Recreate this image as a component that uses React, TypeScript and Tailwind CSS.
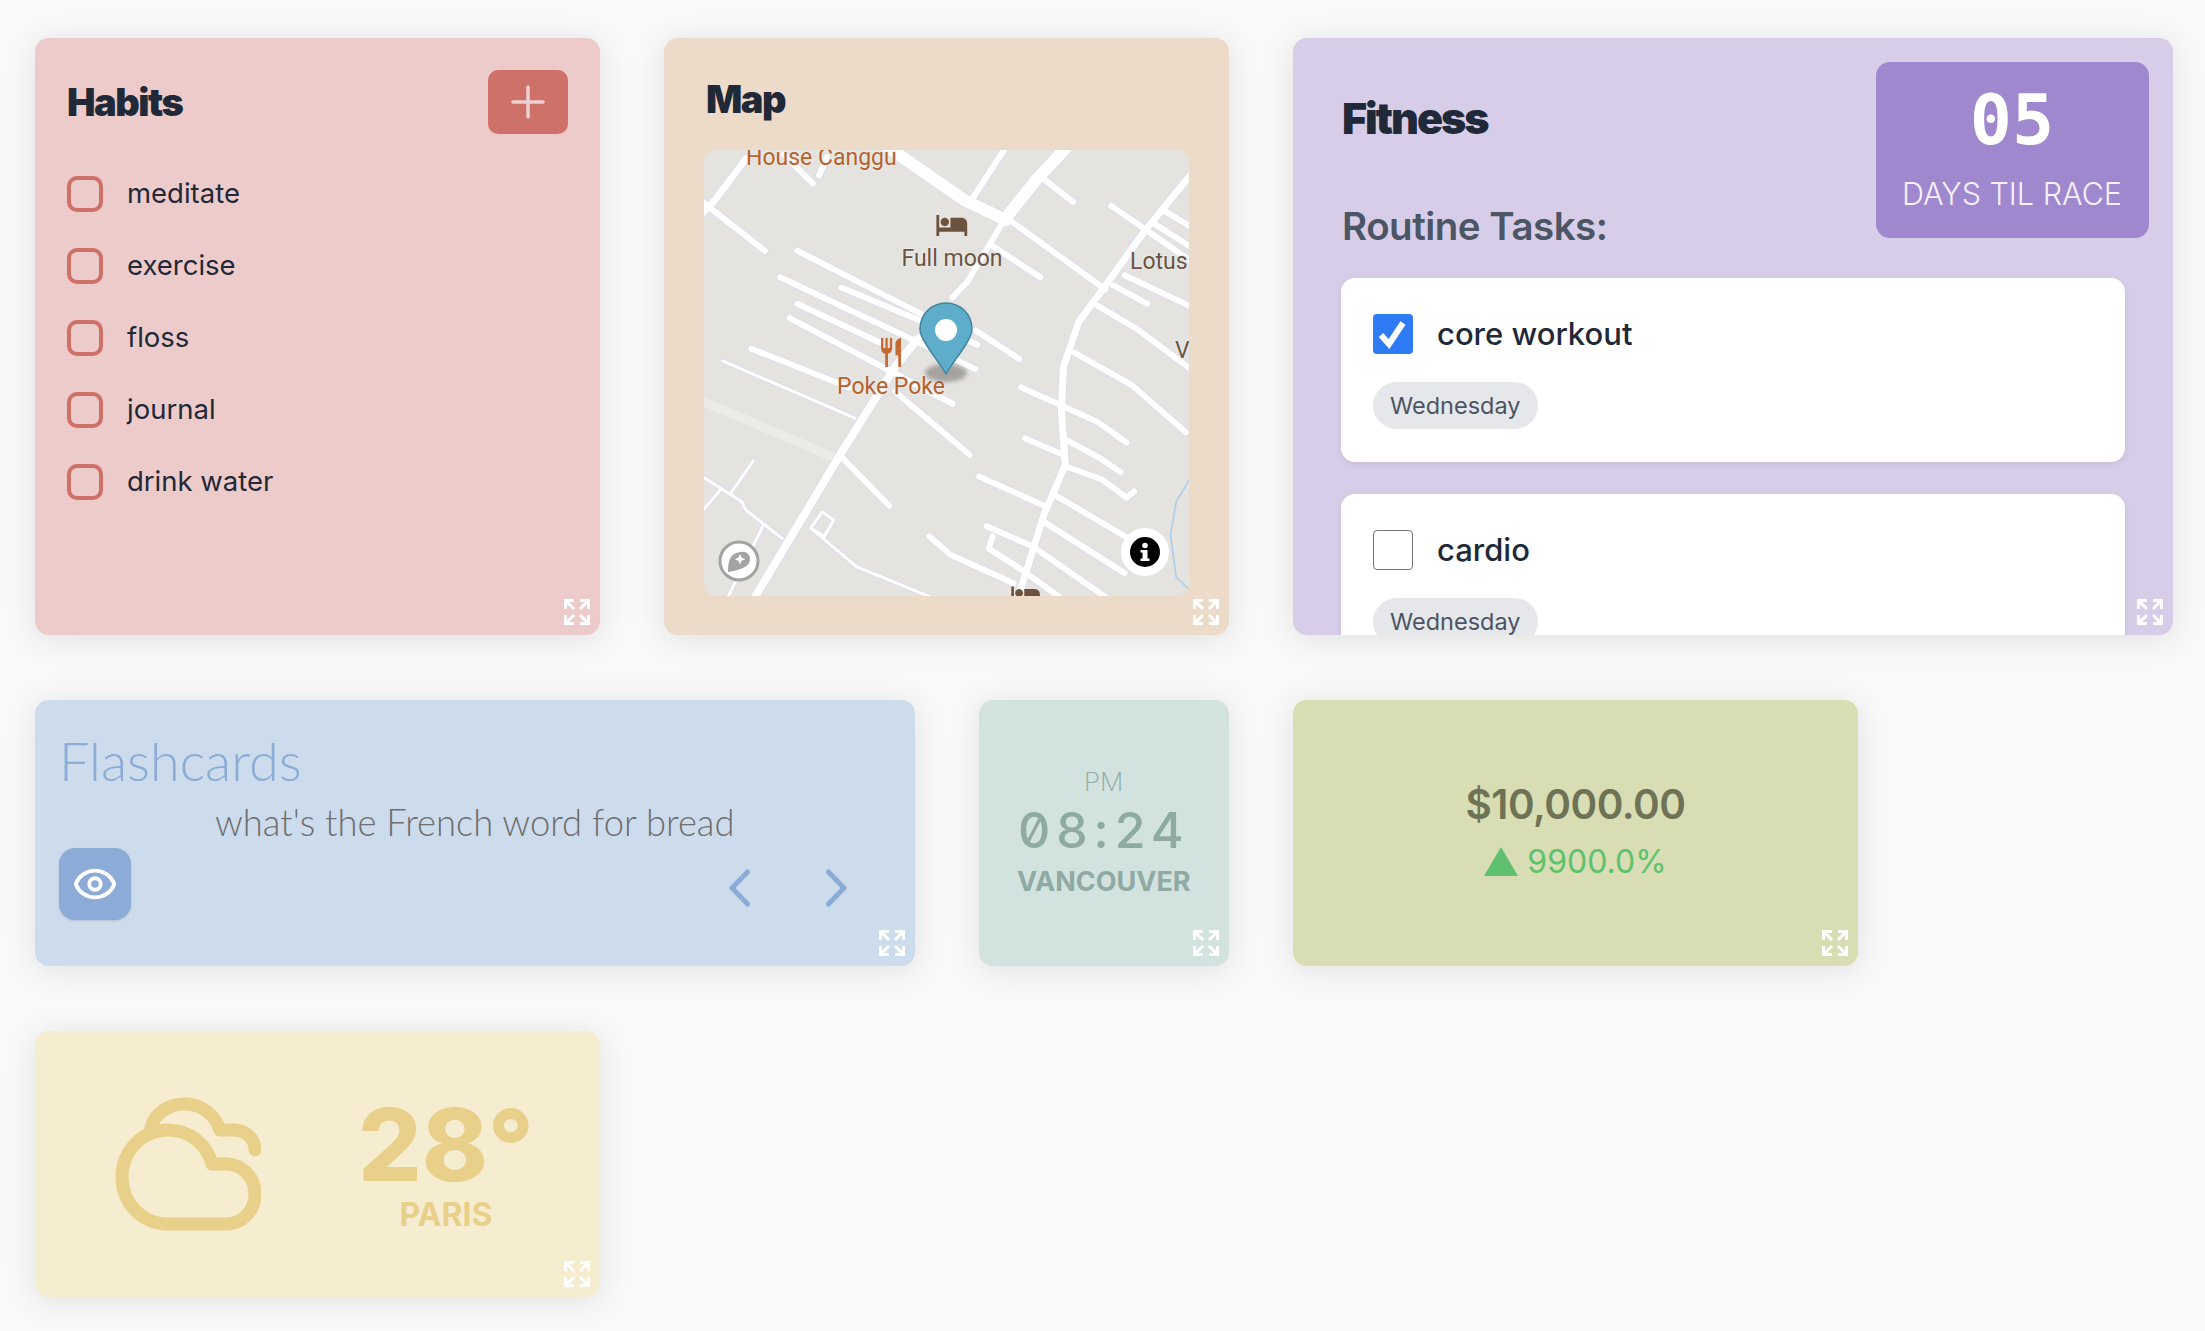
// Dashboard of pastel widgets: habits, map, fitness, flashcards, clock, stocks, weather.
import type { ReactNode } from "react";
import { Eye } from "lucide-react";

const habits = ["meditate", "exercise", "floss", "journal", "drink water"];

// Roads as [stroke width, points], in a 1268x1093 sketch space scaled down to the map box.
const roads: [number, string][] = [
  [12, "620,310 820,440 930,490"],
  [12, "1090,310 1010,390 925,490"],
  [6, "925,490 830,640 790,680"],
  [6, "925,318 840,440"],
  [6, "1030,390 1105,445"],
  [6, "940,490 1190,660"],
  [7, "1420,370 1290,520 1190,650 1120,740 1080,850 1075,960 1085,1090 1030,1210 960,1420"],
  [6, "1205,455 1290,510 1420,595"],
  [6, "1340,465 1420,510"],
  [6, "1320,500 1420,560"],
  [6, "1210,650 1300,695"],
  [6, "1240,625 1420,705"],
  [6, "1170,700 1270,755 1420,860"],
  [6, "1110,815 1260,895 1400,1010"],
  [6, "970,900 1065,940 1170,985 1245,1035"],
  [6, "980,1025 1080,1065"],
  [6, "1090,1030 1170,1070 1230,1108"],
  [6, "1090,1095 1180,1125 1245,1170 1265,1155"],
  [6, "860,1118 1030,1190"],
  [6, "1060,1165 1250,1270"],
  [6, "1030,1230 1240,1355"],
  [6, "880,1240 1000,1290 1200,1420"],
  [6, "895,1265 885,1295 960,1340 1080,1420"],
  [6, "730,1265 785,1310 950,1380"],
  [3, "420,1245 540,1340 750,1420"],
  [3, "450,1205 480,1225 455,1265 420,1245 450,1205"],
  [6, "385,565 720,725"],
  [6, "850,760 965,830"],
  [6, "340,630 850,855"],
  [6, "500,655 855,795"],
  [6, "385,695 600,790"],
  [6, "365,730 790,940"],
  [6, "265,805 520,900"],
  [3, "190,835 535,975"],
  [8, "700,780 640,850 500,1060 270,1420"],
  [6, "500,1070 625,1190"],
  [6, "640,910 835,1065"],
  [6, "130,440 300,565"],
  [7, "250,340 170,440 130,480"],
  [6, "350,330 425,400"],
  [6, "462,335 442,380"],
  [3, "130,1115 240,1180 250,1200 345,1270"],
  [3, "270,1080 210,1160"],
  [3, "185,1150 130,1210"],
  [3, "295,1240 200,1420"],
  [6, "890,550 1020,630"],
];

function ExpandIcon() {
  return (
    <svg
      viewBox="0 0 26 26"
      className="absolute right-[10px] bottom-[10px] h-[26px] w-[26px] text-white"
      fill="none"
      stroke="currentColor"
      strokeWidth="3"
    >
      <path d="M1.5 10V1.5H10M2 2l8 8" />
      <path d="M24.5 10V1.5H16M24 2l-8 8" />
      <path d="M1.5 16v8.5H10M2 24l8-8" />
      <path d="M24.5 16v8.5H16M24 24l-8-8" />
    </svg>
  );
}

function Card({ className, children }: { className: string; children: ReactNode }) {
  return (
    <div
      className={`relative overflow-hidden rounded-[14px] shadow-[0_4px_32px_rgba(0,0,0,0.1)] ${className}`}
    >
      {children}
      <ExpandIcon />
    </div>
  );
}

function Habits() {
  return (
    <Card className="col-span-2 row-span-2 bg-[#edcbcb] pt-[32px] pr-[32px] pl-[32px]">
      <div className="flex items-center justify-between">
        <h2 className="font-['Inter'] text-[38px] leading-[64px] font-black tracking-[-1.5px] text-[#1f2937]">Habits</h2>
        <button className="flex h-[64px] w-[80px] items-center justify-center rounded-[10px] bg-[#cd7169]">
          <svg viewBox="0 0 34 34" className="h-[34px] w-[34px]" stroke="#efcfcf" strokeWidth="3.5" strokeLinecap="round">
            <path d="M17 2v30M2 17h30" />
          </svg>
        </button>
      </div>
      <ul className="mt-[42px] flex flex-col gap-[36px]">
        {habits.map((h) => (
          <li key={h} className="flex h-[36px] items-center gap-[24px]">
            <span className="h-[36px] w-[36px] rounded-[10px] border-[4px] border-[#cd7169]" />
            <span className="font-['Inter'] text-[27.5px] text-[#1f2937]">{h}</span>
          </li>
        ))}
      </ul>
    </Card>
  );
}

function MapLabel({ x, y, anchor, fill, children }: { x: number; y: number; anchor?: "middle"; fill: string; children: string }) {
  return (
    <text
      x={x}
      y={y}
      textAnchor={anchor}
      fill={fill}
      stroke="#ecebe8"
      strokeWidth="2"
      paintOrder="stroke"
      fontSize="23"
      fontFamily="Roboto, sans-serif"
    >
      {children}
    </text>
  );
}

function MapView() {
  return (
    <svg viewBox="0 0 485 446" className="h-[446px] w-[485px] rounded-[12px] bg-[#e5e3df]">
      <g transform="scale(0.3827 0.408) translate(-141 -318)" fill="none" strokeLinecap="round" strokeLinejoin="round">
        <polyline points="141,935 490,1075" stroke="#ecebe6" strokeWidth="9" vectorEffect="non-scaling-stroke" />
        <polyline points="1420,1110 1375,1180 1360,1260 1375,1365 1420,1405" stroke="#a8cdea" strokeWidth="1.5" vectorEffect="non-scaling-stroke" />
        {roads.map(([w, p], i) => (
          <polyline key={i} points={p} stroke="#dcdeeb" strokeWidth={w + 2} vectorEffect="non-scaling-stroke" />
        ))}
        {roads.map(([w, p], i) => (
          <polyline key={i} points={p} stroke="#ffffff" strokeWidth={w} vectorEffect="non-scaling-stroke" />
        ))}
      </g>

      <MapLabel x={42} y={15} fill="#b5622d">House Canggu</MapLabel>
      <MapLabel x={248} y={116} anchor="middle" fill="#6b5445">Full moon</MapLabel>
      <MapLabel x={426} y={119} fill="#6b5445">Lotus</MapLabel>
      <MapLabel x={471} y={208} fill="#6b5445">V</MapLabel>
      <MapLabel x={187} y={244} anchor="middle" fill="#b5622d">Poke Poke</MapLabel>

      {/* hotel icons */}
      <g transform="translate(231 58) scale(1.4)" fill="#6e5240">
        <path d="M7 13c1.66 0 3-1.34 3-3S8.66 7 7 7s-3 1.34-3 3 1.34 3 3 3zm12-6h-8v7H3V5H1v15h2v-3h18v3h2v-9c0-2.21-1.79-4-4-4z" />
      </g>
      <g transform="translate(306 430) scale(1.3)" fill="#6e5240">
        <path d="M7 13c1.66 0 3-1.34 3-3S8.66 7 7 7s-3 1.34-3 3 1.34 3 3 3zm12-6h-8v7H3V5H1v15h2v-3h18v3h2v-9c0-2.21-1.79-4-4-4z" />
      </g>
      {/* restaurant icon */}
      <g transform="translate(173.700 185) scale(1.11 1.45)" fill="#c56a33">
        <path d="M11 9H9V2H7v7H5V2H3v7c0 2.12 1.66 3.84 3.75 3.97V22h2.5v-9.03C11.34 12.84 13 11.12 13 9V2h-2v7zm5-3v8h2.5v8H21V2c-2.76 0-5 2.24-5 4z" />
      </g>

      {/* pin */}
      <ellipse cx="242" cy="223" rx="21" ry="9" fill="#000000" opacity="0.28" className="blur-[2px]" />
      <path
        d="M242 224 C234 210 216 190 216 179 C216 164 228 153 242 153 C256 153 268 164 268 179 C268 190 250 210 242 224 Z"
        fill="#5eaecb"
        stroke="#41869f"
        strokeWidth="1.5"
      />
      <ellipse cx="242" cy="180" rx="11" ry="11" fill="#ffffff" />

      {/* attribution controls */}
      <circle cx="35" cy="411" r="19" fill="#ffffff" stroke="#a3a3a3" strokeWidth="3" />
      <path d="M24 422 C24 412 25 404 36 402 C43 401 46 405 46 409 C46 417 36 420 24 422 Z" fill="#a3a3a3" />
      <path d="M36 404 l1.6 3.6 3.6 1.6 -3.6 1.6 -1.6 3.6 -1.6 -3.6 -3.6 -1.6 3.6 -1.6 z" fill="#ffffff" />
      <circle cx="441" cy="402" r="24" fill="#ffffff" />
      <circle cx="441" cy="402" r="15" fill="#000000" />
      <rect x="438.5" y="400" width="5" height="11" fill="#ffffff" />
      <rect x="436.5" y="400" width="5" height="2.5" fill="#ffffff" />
      <rect x="436.5" y="408.500" width="9" height="2.5" fill="#ffffff" />
      <circle cx="441" cy="395.500" r="2.800" fill="#ffffff" />
    </svg>
  );
}

function MapCard() {
  return (
    <Card className="col-span-2 row-span-2 bg-[#eddbc9] pt-[37px] pl-[40px]">
      <h2 className="pl-[2px] font-['Inter'] text-[38px] leading-[48px] font-black tracking-[-1.5px] text-[#1f2937]">Map</h2>
      <div className="mt-[27px]">
        <MapView />
      </div>
    </Card>
  );
}

function Task({ label, done }: { label: string; done?: boolean }) {
  return (
    <div className="h-[184px] shrink-0 rounded-[14px] bg-white px-[32px] pt-[36px] shadow-[0_2px_6px_rgba(0,0,0,0.08)]">
      <div className="flex h-[40px] items-center gap-[24px]">
        {done ? (
          <span className="flex h-[40px] w-[40px] items-center justify-center rounded-[4px] bg-[#2f7bf5]">
            <svg viewBox="0 0 40 40" className="h-[40px] w-[40px]" fill="none" stroke="#ffffff" strokeWidth="6">
              <path d="M8 21l8 9L30 9" />
            </svg>
          </span>
        ) : (
          <span className="h-[40px] w-[40px] rounded-[4px] border-[1.5px] border-[#767676] bg-white" />
        )}
        <span className="font-['Inter'] text-[31px] font-medium text-[#1f2937]">{label}</span>
      </div>
      <span className="mt-[28px] inline-flex h-[47px] items-center rounded-full bg-[#e5e7eb] px-[17px] font-['Inter'] text-[23.5px] text-[#4b5563]">
        Wednesday
      </span>
    </div>
  );
}

function Fitness() {
  return (
    <Card className="col-span-3 row-span-2 bg-[#d7cde9] px-[48px] pt-[56px]">
      <div className="absolute top-[24px] right-[24px] flex h-[176px] w-[273px] flex-col items-center rounded-[14px] bg-[#a088cf] pt-[18px] text-[#f6f0fb]">
        <span className="font-['DejaVu_Sans_Mono'] text-[70px] leading-[80px] font-bold text-white">05</span>
        <span className="mt-[16px] font-['Inter'] text-[30.5px] leading-[36px] font-light">DAYS TIL RACE</span>
      </div>
      <h2 className="pl-[1px] font-['Inter'] text-[43px] leading-[48px] font-black tracking-[-2px] text-[#1f2937]">Fitness</h2>
      <h3 className="mt-[62px] pl-[1px] font-['Inter'] text-[38.5px] leading-[44px] font-semibold tracking-[-0.5px] text-[#4b5563]">
        Routine Tasks:
      </h3>
      <div className="mt-[30px] flex flex-col gap-[32px]">
        <Task label="core workout" done />
        <Task label="cardio" />
      </div>
    </Card>
  );
}

function Flashcards() {
  return (
    <Card className="col-span-3 bg-[#cddcec] px-[24px] pt-[31px]">
      <h2 className="font-['Lato'] text-[54px] leading-[60px] font-light text-[#8cabd7]">
        Flashcards
      </h2>
      <p className="mt-[9px] text-center font-['Lato'] text-[36.4px] leading-[44px] font-light text-[#6e6e6e]">
        what's the French word for bread
      </p>
      <div className="mt-[4px] flex items-start justify-between">
        <button className="flex h-[72px] w-[72px] items-center justify-center rounded-[16px] bg-[#8cabd7] shadow-sm">
          <Eye size={46} color="#ffffff" strokeWidth={2} />
        </button>
        <div className="mt-[21px] mr-[44px] flex gap-[74px]">
          <svg viewBox="0 0 22 38" className="h-[38px] w-[22px]" fill="none" stroke="#8cabd7" strokeWidth="5" strokeLinecap="round" strokeLinejoin="round">
            <path d="M18.500 3L3 19l15.500 16" />
          </svg>
          <svg viewBox="0 0 22 38" className="h-[38px] w-[22px]" fill="none" stroke="#8cabd7" strokeWidth="5" strokeLinecap="round" strokeLinejoin="round">
            <path d="M3.500 3L19 19 3.500 35" />
          </svg>
        </div>
      </div>
    </Card>
  );
}

function Clock() {
  return (
    <Card className="flex flex-col items-center bg-[#d2e2df] pt-[68px] text-[#8fa9a3]">
      <span className="font-['Inter'] text-[26px] leading-[28px] font-extralight">PM</span>
      <span className="mt-[10px] font-['Inter'] text-[50px] leading-[48px] font-medium tracking-[6px] slashed-zero">08:24</span>
      <span className="mt-[10px] font-['Inter'] text-[27px] leading-[36px] font-bold">VANCOUVER</span>
    </Card>
  );
}

function Stocks() {
  return (
    <Card className="col-span-2 flex flex-col items-center bg-[#d8ddb3] pt-[79px]">
      <span className="font-['Inter'] text-[40.5px] leading-[52px] font-semibold tracking-[-0.5px] text-[#6f7355]">$10,000.00</span>
      <div className="mt-[11px] flex h-[40px] items-center gap-[9px]">
        <svg viewBox="0 0 34 29" className="mb-[2px] h-[29px] w-[34px]" fill="#5fc16f">
          <path d="M17 0l17 29H0z" />
        </svg>
        <span className="font-['Inter'] text-[32px] leading-[40px] text-[#5cc26c]">9900.0%</span>
      </div>
    </Card>
  );
}

function Weather() {
  return (
    <Card className="col-span-2 flex items-center bg-[#f6edd1] pl-[80px] text-[#e8d08a]">
      <svg viewBox="0 0 146 134" className="h-[134px] w-[146px]" fill="none" stroke="currentColor" strokeWidth="13" strokeLinecap="round" strokeLinejoin="round">
        <path d="M53 127C27 127 7 106 7 80C7 54 27 33 53 33C74 33 92 47 97 67L111 67C127 67 140 80 140 97C140 114 127 127 111 127Z" />
        <path d="M36 30C40 16 54 7 70 7C87 7 100 18 105 33L119 33C131 33 140 42 140 53" />
      </svg>
      <div className="ml-[85px] flex w-[200px] flex-col items-center">
        <span className="font-['Inter'] text-[100px] leading-[100px] font-extrabold">28°</span>
        <span className="mt-[2px] font-['Inter'] text-[32px] leading-[36px] font-bold">PARIS</span>
      </div>
    </Card>
  );
}

export default function App() {
  return (
    <div className="min-h-screen bg-[#f9f9f9] pt-[38px] pl-[35px] font-['Lato',sans-serif]">
      <div className="grid auto-rows-[266px] grid-cols-[repeat(7,250.5px)] gap-x-[64px] gap-y-[65px]">
        <Habits />
        <MapCard />
        <Fitness />
        <Flashcards />
        <Clock />
        <Stocks />
        <Weather />
      </div>
    </div>
  );
}
